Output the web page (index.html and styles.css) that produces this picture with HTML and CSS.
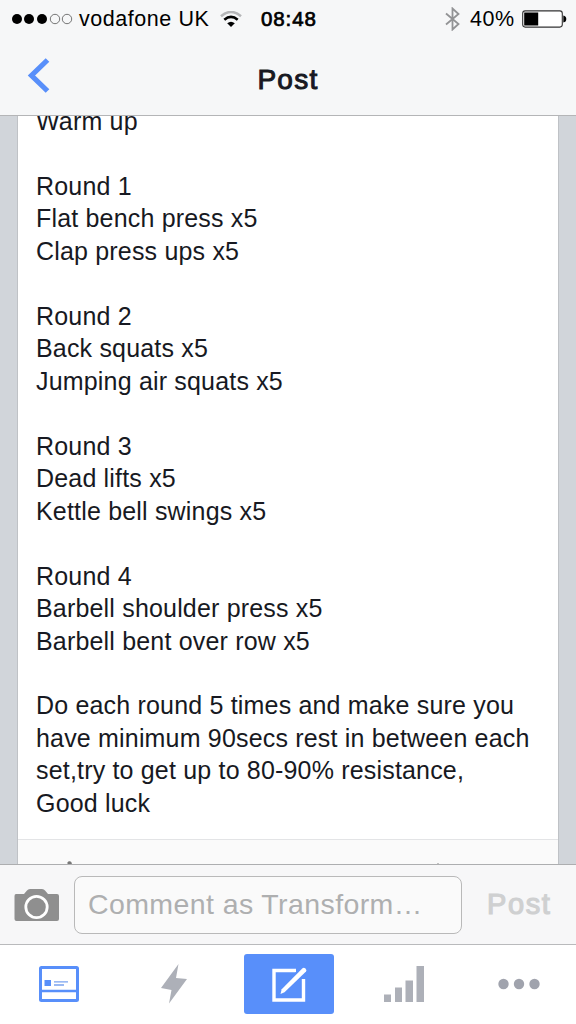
FILE: index.html
```html
<!DOCTYPE html>
<html lang="en">
<head>
    <meta charset="UTF-8" />
    <meta name="viewport" content="width=device-width, initial-scale=1" />
    <title>Post</title>
    <link rel="stylesheet" href="styles.css">
</head>
<body>
<header>
    <div class="status-bar">
        <svg class="signal" width="62" height="12" viewBox="0 0 62 12">
            <circle cx="6" cy="6" r="5" />
            <circle cx="18" cy="6" r="5" />
            <circle cx="31" cy="6" r="5" />
            <circle class="off" cx="44" cy="6" r="4.7" />
            <circle class="off" cx="56" cy="6" r="4.7" />
        </svg>
        <span class="carrier">vodafone UK</span>
        <svg class="wifi" width="22" height="17" viewBox="0 0 22 17">
            <path d="M1 5.2Q11 -3.2 21 5.2" stroke="#b5b6b8" />
            <path d="M4.3 8.7Q11 3 17.7 8.7" stroke="#000" />
            <path d="M7.2 12.3Q11 9 14.8 12.3L11 16Z" class="wifi-dot" />
        </svg>
        <span class="clock">08:48</span>
        <svg class="bluetooth" width="15" height="24" viewBox="0 0 15 24">
            <path d="M1 6.5L13.5 17L7.5 22.5V1.500L13.5 7L1 17.5" />
        </svg>
        <span class="percent">40%</span>
        <svg class="battery" width="45" height="18" viewBox="0 0 45 18">
            <rect x=".7" y=".9" width="39.6" height="16.2" rx="2.5" fill="#fff" stroke="#333" stroke-width="1.1" />
            <rect x="2.2" y="2.5" width="14" height="13" />
            <path d="M41.3 5.5Q44.3 6 44.3 9Q44.3 12 41.3 12.5Z" />
        </svg>
    </div>
    <div class="nav-bar">
        <svg class="back" width="24" height="37" viewBox="0 0 24 37">
            <path d="M21.5 2L5.500 17.500L21.5 33" />
        </svg>
        <h1>Post</h1>
    </div>
</header>

<main>
    <article class="card">
        <div class="post-text">
            <p>Warm up</p>
            <p>Round 1<br>Flat bench press x5<br>Clap press ups x5</p>
            <p>Round 2<br>Back squats x5<br>Jumping air squats x5</p>
            <p>Round 3<br>Dead lifts x5<br>Kettle bell swings x5</p>
            <p>Round 4<br>Barbell shoulder press x5<br>Barbell bent over row x5</p>
            <p>Do each round 5 times and make sure you<br>have minimum 90secs rest in between each<br>set,try to get up to 80-90% resistance,<br>Good luck</p>
        </div>
        <div class="card-actions">
            <svg width="540" height="25" viewBox="0 0 540 25">
                <path d="M49.500 25V22.500Q50 21 52 21.200Q54 21.500 54 25Z" fill="#777" />
                <path d="M201 24.500H218" stroke="#e4e4e4" />
                <path d="M418.500 25L420 23L421.500 25Z" fill="#666" />
            </svg>
        </div>
    </article>
</main>

<form class="comment-bar">
    <svg class="camera" width="46" height="34" viewBox="0 0 46 34">
        <path d="M2 6H10L13 2.500Q14 1 16 1H28Q30 1 31 2.500L34 6H43Q45 6 45 8V31Q45 33 43 33H2.500Q.5 33 .5 31V8Q.5 6 2 6Z" fill="#8f8f8f" />
        <circle cx="22.500" cy="19" r="10.700" fill="none" stroke="#fff" stroke-width="2.800" />
    </svg>
    <div class="comment-input">Comment as Transform…</div>
    <span class="send">Post</span>
</form>

<nav class="tab-bar">
    <a class="tab">
        <svg width="40" height="36" viewBox="0 0 40 36">
            <rect x="1.500" y="1.500" width="37" height="33" rx="1" fill="#fff" stroke="#588ffa" stroke-width="3" />
            <path d="M1 25H39" stroke="#588ffa" stroke-width="2.600" />
            <rect x="5.500" y="14" width="6.500" height="6" fill="#588ffa" />
            <path d="M15 15.800H29M15 19H25" stroke="#79a2ef" stroke-width="1.300" />
        </svg>
    </a>
    <a class="tab">
        <svg width="28" height="40" viewBox="0 0 28 40">
            <path d="M18.500 0L1 24L11.500 26L9 39.500L27 15L16 14Z" fill="#adb0b8" />
        </svg>
    </a>
    <a class="tab">
        <span class="compose">
            <svg width="40" height="38" viewBox="0 0 40 38">
                <path d="M27 5.500H5V35H34.500V14" fill="none" stroke="#fff" stroke-width="3.400" />
                <path d="M33.500 3.200Q34.800 2 36.500 3.500Q38.200 5.300 37 6.500L15.500 27.300L11.500 29L12.700 24.300Z" fill="#fff" stroke="#588ffa" stroke-width="4" paint-order="stroke" />
            </svg>
        </span>
    </a>
    <a class="tab">
        <svg class="bars" width="40" height="36" viewBox="0 0 40 36">
            <rect y="28.500" width="7" height="7.500" />
            <rect x="11" y="21.500" width="7" height="14.500" />
            <rect x="21.500" y="14.500" width="7.500" height="21.500" />
            <rect x="32.500" width="7.500" height="36" />
        </svg>
    </a>
    <a class="tab">
        <svg class="more" width="42" height="12" viewBox="0 0 42 12">
            <circle cx="5.500" cy="6" r="5.200" />
            <circle cx="21" cy="6" r="5.200" />
            <circle cx="36.500" cy="6" r="5.200" />
        </svg>
    </a>
</nav>
</body>
</html>
```
FILE: styles.css
```css
* {
    box-sizing: border-box;
}
body {
    margin: 0;
    height: 1024px;
    overflow: hidden;
    display: flex;
    flex-direction: column;
    font-family: "Liberation Sans", Arial, sans-serif;
    color: #171922;
    background: #d1d5da;
}
svg {
    display: block;
    flex: none;
}

/* Header */
header {
    flex: none;
    height: 116px;
    background: #f6f7f8;
    border-bottom: 1px solid #b4b5b7;
}
.status-bar {
    height: 38px;
    padding-left: 11px;
    display: flex;
    align-items: center;
    font-size: 21.5px;
    color: #000;
    white-space: nowrap;
}
.signal .off {
    fill: none;
    stroke: #555;
    stroke-width: 0.8;
}
.carrier {
    width: 131px;
    margin-left: 6px;
    letter-spacing: 0.55px;
}
.wifi {
    margin-left: 10px;
}
.wifi path {
    fill: none;
    stroke-width: 2.6;
}
.wifi .wifi-dot {
    fill: #000;
}
.clock {
    width: 56px;
    margin-left: 19px;
    font-size: 20.5px;
    letter-spacing: 0.9px;
    -webkit-text-stroke: 0.7px #000;
}
.bluetooth {
    margin-left: 128px;
}
.bluetooth path {
    fill: none;
    stroke: #929395;
    stroke-width: 1.8;
}
.percent {
    width: 46px;
    margin-left: 10px;
    letter-spacing: 0.6px;
}
.battery {
    margin-left: 6px;
}
.nav-bar {
    height: 77px;
    display: grid;
    grid-template-columns: 100px 1fr 100px;
    align-items: start;
}
.back {
    margin: 20px 0 0 26px;
}
.back path {
    fill: none;
    stroke: #588ffa;
    stroke-width: 5.2;
}
h1 {
    margin: 26px 0 0;
    font-size: 28px;
    font-weight: normal;
    line-height: 32px;
    letter-spacing: 1.3px;
    text-align: center;
    -webkit-text-stroke: 1px #171922;
}

/* Post */
main {
    flex: none;
    height: 748px;
    padding: 0 17px;
    overflow: hidden;
}
.card {
    height: 748px;
    background: #fff;
    border: solid #bfc2c6;
    border-width: 0 1px;
    overflow: hidden;
}
.post-text {
    height: 734px;
    margin-top: -11px;
    padding-left: 18px;
    font-size: 25px;
    line-height: 32.47px;
    letter-spacing: 0.18px;
    white-space: nowrap;
}
.post-text p {
    margin: 0 0 32.47px;
}
.card-actions {
    height: 26px;
    background: #fafafa;
    border-top: 1px solid #e3e4e6;
}

/* Comment */
.comment-bar {
    flex: none;
    height: 81px;
    padding-left: 14px;
    display: flex;
    align-items: center;
    background: #f7f7f8;
    border-top: 1px solid #adaeb0;
    border-bottom: 1px solid #b9babc;
}
.comment-input {
    width: 388px;
    height: 58px;
    margin-left: 14px;
    padding-left: 13px;
    border: 1px solid #b9b9b9;
    border-radius: 8px;
    background: #fafafa;
    color: #aeafb0;
    font-size: 28.5px;
    line-height: 54px;
    letter-spacing: 0.4px;
    white-space: nowrap;
}
.send {
    margin-left: 25px;
    color: #cfd0d1;
    font-size: 29px;
    letter-spacing: 1.6px;
    -webkit-text-stroke: 1.2px #cfd0d1;
}

/* Tabs */
.tab-bar {
    flex: none;
    height: 79px;
    padding: 0 0 1px 1px;
    display: grid;
    grid-template-columns: repeat(5, 1fr);
    align-items: center;
    background: #fff;
}
.tab {
    display: flex;
    justify-content: center;
}
.compose {
    width: 90px;
    height: 60px;
    display: flex;
    align-items: center;
    justify-content: center;
    border-radius: 3px;
    background: #588ffa;
}
.bars {
    fill: #adb0b8;
}
.more {
    fill: #a0a3ad;
}
```
